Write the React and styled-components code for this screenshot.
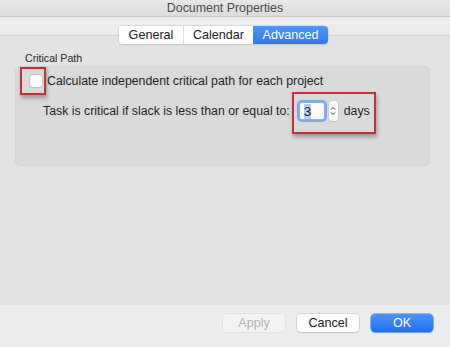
import React from 'react';
import styled, { createGlobalStyle } from 'styled-components';

const GlobalStyle = createGlobalStyle`
  html, body { margin: 0; padding: 0; }
  body {
    width: 450px;
    height: 347px;
    overflow: hidden;
    font-family: "Liberation Sans", Arial, sans-serif;
    color: #1f1f1f;
    background: #ececec;
  }
`;

const Window = styled.div`
  width: 450px;
  height: 347px;
  display: flex;
  flex-direction: column;
  background: #e3e3e3;
`;

const TitleBar = styled.div`
  height: 16px;
  display: flex;
  align-items: center;
  justify-content: center;
  font-size: 12.4px;
  color: #4a4a4a;
  background: linear-gradient(#e8e8e8, #dcdcdc);
  border-bottom: 1px solid #c4c4c4;
`;

const TabStrip = styled.div`
  position: relative;
  height: 18px;
  background: #ececec;
  border-bottom: 1px solid #d2d2d2;
`;

const Tabs = styled.div`
  position: absolute;
  left: 119px;
  top: 9px;
  display: flex;
  height: 18px;
  border-radius: 4px;
  background: #fff;
  box-shadow: 0 0 0 0.5px #c6c6c6, 0 1px 1px rgba(0, 0, 0, 0.15);
  overflow: hidden;
`;

const Tab = styled.div`
  width: ${p => p.$w}px;
  display: flex;
  align-items: center;
  justify-content: center;
  font-size: 12.6px;
  color: ${p => (p.$active ? '#fff' : '#222')};
  background: ${p => (p.$active ? 'linear-gradient(#4f96fb, #2f7af2)' : '#fff')};
  border-left: ${p => (p.$first || p.$active ? 'none' : '1px solid #dcdcdc')};
`;

const Content = styled.div`
  flex: 1;
  padding: 15px 20px 0 15px;
`;

const GroupLabel = styled.div`
  font-size: 10.6px;
  color: #2a2a2a;
  padding-left: 10px;
  height: 14px;
  line-height: 15px;
`;

const Group = styled.div`
  position: relative;
  height: 100px;
  margin-top: 1px;
  border-radius: 5px;
  background: #dadada;
  border: 1px solid #d3d3d3;
  padding: 6px 0 0 14px;
  box-sizing: border-box;
`;

const Row = styled.div`
  display: flex;
  align-items: center;
  font-size: 12.3px;
  height: ${p => p.$h}px;
  margin-top: ${p => p.$top || 0}px;
  padding-left: ${p => p.$indent || 0}px;
`;

const Checkbox = styled.div`
  width: 12px;
  height: 12px;
  margin-right: 5px;
  border-radius: 3px;
  background: #fff;
  box-shadow: 0 0 0 0.5px #b4b4b4, 0 1px 1px rgba(0, 0, 0, 0.1);
`;

const NumberField = styled.div`
  width: 20px;
  height: 16px;
  padding-left: 4px;
  margin-left: 10px;
  display: flex;
  align-items: center;
  background: #fff;
  border-radius: 2px;
  box-shadow: 0 0 0 1px #8bb0ea, 0 0 0 3px #7fa7ea;
  font-size: 13.5px;
  span {
    background: #b3d1fb;
    line-height: 15px;
  }
`;

const Stepper = styled.div`
  width: 9px;
  height: 20px;
  margin-left: 5px;
  border-radius: 4px;
  background: #fff;
  box-shadow: 0 0 0 0.5px #c0c0c0, 0 1px 1px rgba(0, 0, 0, 0.1);
  display: flex;
  align-items: center;
  justify-content: center;
`;

const Unit = styled.span`
  margin-left: 6px;
`;

const Callout = styled.div`
  position: absolute;
  left: ${p => p.$x}px;
  top: ${p => p.$y}px;
  width: ${p => p.$w}px;
  height: ${p => p.$h}px;
  border: 2px solid #c1313b;
  box-sizing: border-box;
  box-shadow: 1px 3px 4px rgba(0, 0, 0, 0.3);
`;

const Footer = styled.div`
  height: 42px;
  background: #ececec;
  display: flex;
  justify-content: flex-end;
  align-items: flex-start;
  gap: 12px;
  padding: 9px 17px 0 0;
  box-sizing: border-box;
`;

const Button = styled.div`
  width: 62px;
  height: 18px;
  border-radius: 4px;
  display: flex;
  align-items: center;
  justify-content: center;
  font-size: 12.6px;
  color: ${p => (p.$primary ? '#fff' : p.$disabled ? '#b3b3b3' : '#222')};
  background: ${p =>
    p.$primary ? 'linear-gradient(#4a93fa, #1f6ef0)' : p.$disabled ? '#f3f3f3' : '#fff'};
  box-shadow: ${p =>
    p.$primary
      ? '0 0 0 0.5px #2a6fd8, 0 1px 1px rgba(0,0,0,0.15)'
      : p.$disabled
      ? '0 0 0 0.5px #d8d8d8'
      : '0 0 0 0.5px #c2c2c2, 0 1px 1px rgba(0,0,0,0.15)'};
`;

const App = () => (
  <>
    <GlobalStyle />
    <Window>
      <TitleBar>Document Properties</TitleBar>
      <TabStrip>
        <Tabs>
          <Tab $w={64} $first>General</Tab>
          <Tab $w={69}>Calendar</Tab>
          <Tab $w={75} $active>Advanced</Tab>
        </Tabs>
      </TabStrip>
      <Content>
        <GroupLabel>Critical Path</GroupLabel>
        <Group>
          <Row $h={15}>
            <Checkbox />
            <span>Calculate independent critical path for each project</span>
          </Row>
          <Row $h={22} $indent={13} $top={12}>
            <span>Task is critical if slack is less than or equal to:</span>
            <NumberField>
              <span>3</span>
            </NumberField>
            <Stepper>
              <svg width="6" height="12" viewBox="0 0 6 12">
                <path d="M1 4.5 L3 2.5 L5 4.5 M1 7.5 L3 9.5 L5 7.5" fill="none" stroke="#333" strokeWidth="1" />
              </svg>
            </Stepper>
            <Unit>days</Unit>
          </Row>
          <Callout $x={4} $y={0} $w={26} $h={28} />
          <Callout $x={276} $y={25} $w={84} $h={42} />
        </Group>
      </Content>
      <Footer>
        <Button $disabled>Apply</Button>
        <Button>Cancel</Button>
        <Button $primary>OK</Button>
      </Footer>
    </Window>
  </>
);

export default App;
